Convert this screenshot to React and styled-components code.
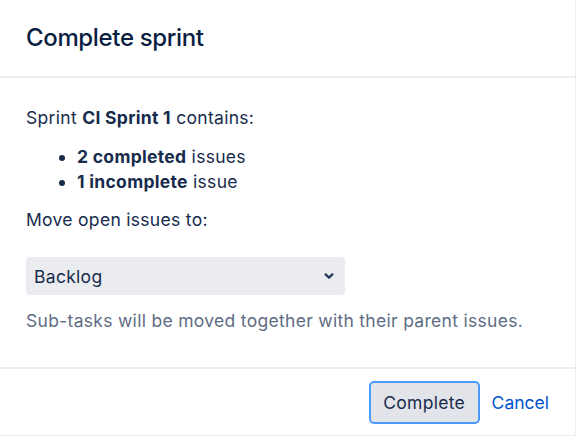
import React from 'react';
import styled, { createGlobalStyle } from 'styled-components';

const GlobalStyle = createGlobalStyle`
  html, body {
    margin: 0;
    padding: 0;
    background: #ffffff;
  }
  body {
    font-family: Inter, "Noto Sans", sans-serif;
    color: #172b4d;
  }
`;

const Modal = styled.div`
  width: 576px;
  height: 436px;
  box-sizing: border-box;
  border-right: 1px solid #ebecf0;
  border-bottom: 1px solid #ebecf0;
  display: flex;
  flex-direction: column;
  background: #fff;
`;

const Header = styled.div`
  height: 78px;
  box-sizing: border-box;
  padding: 0 26px 2px;
  display: flex;
  align-items: center;
  border-bottom: 2px solid #ebecf0;
`;

const Title = styled.h1`
  margin: 0;
  font-size: 24px;
  font-weight: 500;
  letter-spacing: -0.35px;
  color: #091e42;
`;

const Body = styled.div`
  flex: 1;
  padding: 27px 26px 0;
  font-size: 17.5px;
  line-height: 25px;
  letter-spacing: 0.3px;
`;

const Para = styled.p`
  margin: 0 0 ${p => p.$gap || 0}px;
`;

const List = styled.ul`
  margin: 0 0 13px;
  padding-left: 51px;
  line-height: 25px;
`;

const Select = styled.div`
  margin-top: 25px;
  width: 319px;
  height: 38px;
  box-sizing: border-box;
  padding: 0 10px 0 8px;
  background: #ebecf0;
  border-radius: 4px;
  display: flex;
  align-items: center;
  justify-content: space-between;
`;

const Helper = styled.div`
  margin-top: 13px;
  color: #5e6c84;
`;

const Footer = styled.div`
  height: 68px;
  box-sizing: border-box;
  border-top: 2px solid #ebecf0;
  display: flex;
  align-items: center;
  justify-content: flex-end;
  padding: 0 26px 0 0;
  gap: 12px;
`;

const Button = styled.button`
  font-family: inherit;
  font-size: 17.5px;
  letter-spacing: 0.3px;
  color: #172b4d;
  background: #e2e4e9;
  border: 2px solid #4c9aff;
  border-radius: 5px;
  height: 43px;
  width: 111px;
  padding: 0;
`;

const LinkButton = styled.button`
  font-family: inherit;
  font-size: 17.5px;
  color: #0052cc;
  background: none;
  border: none;
  padding: 0;
`;

const Chevron = () => (
  <svg width="12" height="12" viewBox="0 0 12 12">
    <path d="M2.6 4.4 L6 7.6 L9.4 4.4" fill="none" stroke="#253858" strokeWidth="2.3" strokeLinecap="round" strokeLinejoin="round" />
  </svg>
);

export default function App() {
  return (
    <>
      <GlobalStyle />
      <Modal>
        <Header>
          <Title>Complete sprint</Title>
        </Header>
        <Body>
          <Para $gap={14}>
            Sprint <b>CI Sprint 1</b> contains:
          </Para>
          <List>
            <li><b>2 completed</b> issues</li>
            <li><b>1 incomplete</b> issue</li>
          </List>
          <Para>Move open issues to:</Para>
          <Select>
            <span>Backlog</span>
            <Chevron />
          </Select>
          <Helper>Sub-tasks will be moved together with their parent issues.</Helper>
        </Body>
        <Footer>
          <Button>Complete</Button>
          <LinkButton>Cancel</LinkButton>
        </Footer>
      </Modal>
    </>
  );
}
